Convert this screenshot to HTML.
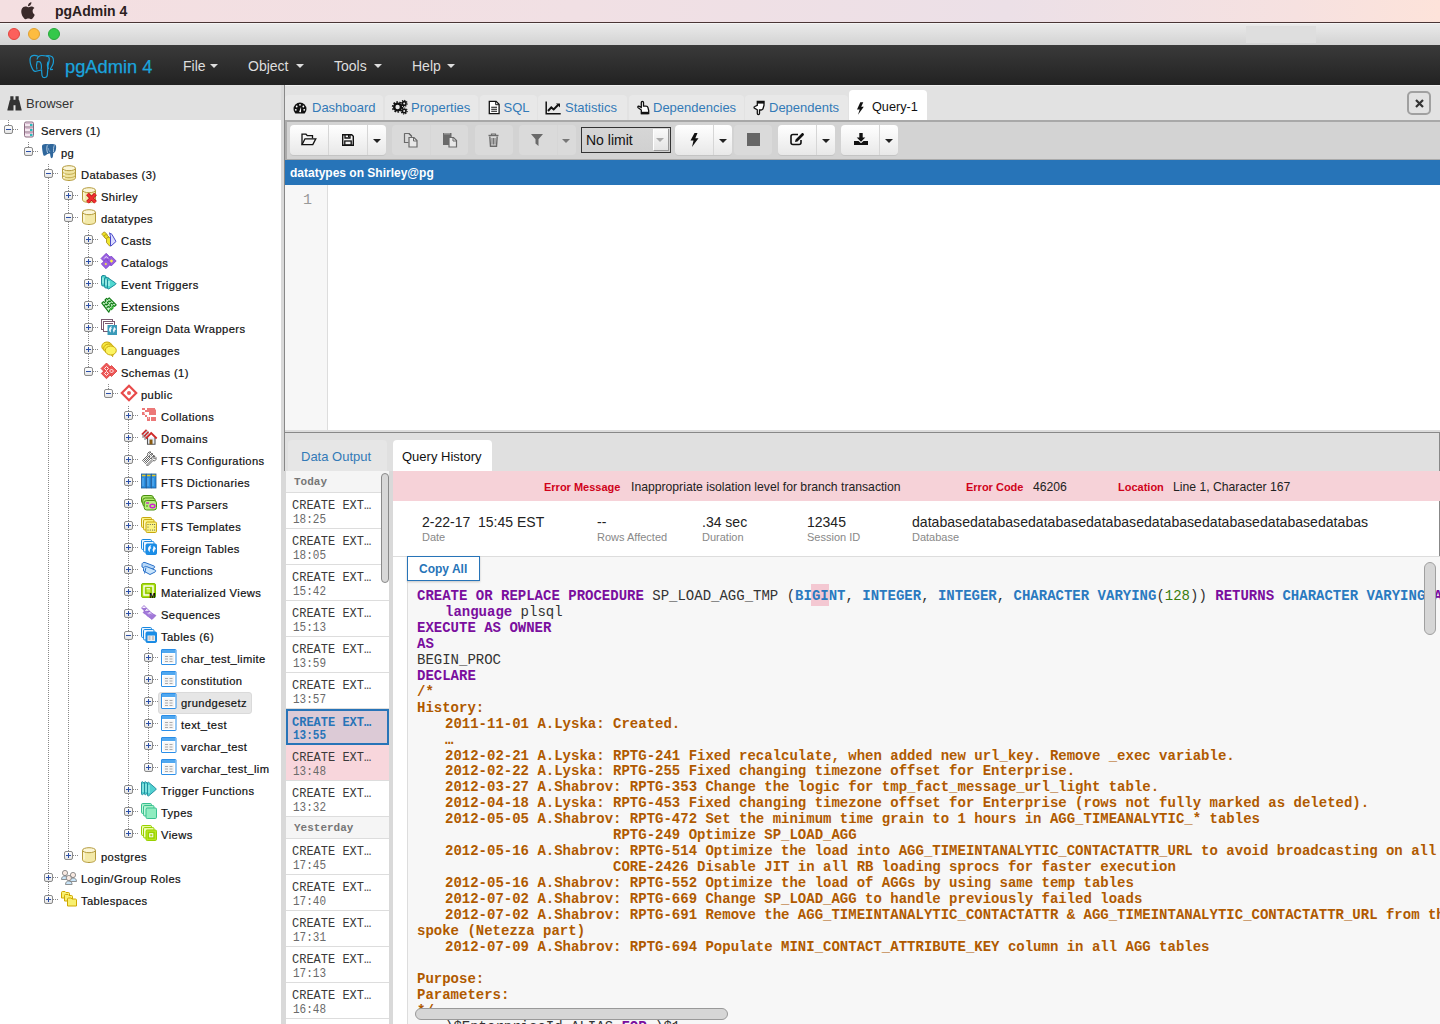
<!DOCTYPE html>
<html><head><meta charset="utf-8"><style>
*{box-sizing:border-box}
html,body{margin:0;padding:0;width:1440px;height:1024px;overflow:hidden;background:#fff;font-family:"Liberation Sans",sans-serif;position:relative}
.a{position:absolute}
.t{position:absolute;white-space:pre;line-height:1}
svg{position:absolute;overflow:visible}
#menubar{left:0;top:0;width:1440px;height:22px;background:linear-gradient(90deg,#f4dfe1 0%,#f1e0e4 40%,#ece0e7 70%,#f6e1e0 90%,#fde3da 100%)}
#mbline{left:0;top:22px;width:1440px;height:1px;background:#4a3535}
#titlebar{left:0;top:23px;width:1440px;height:22px;background:linear-gradient(#ebebeb,#d3d3d3)}
.light{position:absolute;top:28px;width:12px;height:12px;border-radius:50%}
#navbar{left:0;top:45px;width:1440px;height:40px;background:linear-gradient(#3a3a3a,#222)}
.menu{position:absolute;top:59px;font-size:14px;color:#dedede;line-height:1}
.caret{position:absolute;top:64px;width:0;height:0;border-left:4px solid transparent;border-right:4px solid transparent;border-top:4px solid #dedede}
#lhead{left:0;top:85px;width:281px;height:35px;background:#e1e1e1}
#tree{left:0;top:120px;width:281px;height:904px;background:#fff;overflow:hidden}
#split{left:281px;top:85px;width:5px;height:939px;background:#d9d9d9}
#tabs{left:285px;top:85px;width:1155px;height:35px;background:#e2e2e2;border-top:1px solid #f0f0f0}
.tab{position:absolute;top:95px;height:25px;background:#e8e8e8;border-radius:4px 4px 0 0}
.tabt{position:absolute;top:101px;font-size:13px;color:#337ab7;line-height:1;white-space:pre}
#toolbar{left:285px;top:120px;width:1155px;height:40px;background:#d3d3d3;border-top:2px solid #a8a8a8;border-bottom:1px solid #aaa;border-left:2px solid #ababab}
.btn{position:absolute;top:125px;height:30px;background:linear-gradient(#fff,#e8e8e8);border-radius:4px;box-shadow:0 1px 0 #c4c4c4}
.btnd{position:absolute;top:125px;height:30px;background:#dadada;border-radius:4px}
.dv{position:absolute;top:125px;width:1px;height:30px;background:#d6d6d6}
#bluebar{left:285px;top:160px;width:1155px;height:25px;background:#2774b8}
#editor{left:285px;top:185px;width:1155px;height:245px;background:#fff}
#gutter{left:285px;top:185px;width:43px;height:245px;background:#f7f7f7;border-right:1px solid #ddd}
#edbot{left:285px;top:430px;width:1155px;height:3px;background:#dcdcdc;border-bottom:1px solid #888}
#btabs{left:285px;top:433px;width:1155px;height:38px;background:#e0e0e0}
#vline{left:284px;top:85px;width:1px;height:386px;background:#888}
#hist{left:286px;top:471px;width:103px;height:553px;background:#fff;overflow:hidden}
#hgap{left:389px;top:471px;width:4px;height:553px;background:#d9d9d9}
.hh{position:absolute;left:0;width:103px;height:22px;background:#f5f5f5;border-bottom:1px solid #ddd}
.hht{position:absolute;left:8px;top:6px;font-family:"Liberation Mono",monospace;font-weight:bold;font-size:11px;color:#777;line-height:1}
.hi{position:absolute;left:0;width:103px;height:36px;border-bottom:1px solid #ddd;background:#fff}
.hi1{position:absolute;left:6px;top:7px;font-family:"Liberation Mono",monospace;font-size:12px;color:#3a3a3a;line-height:1;white-space:pre}
.hi2{position:absolute;left:7px;top:21px;font-family:"Liberation Mono",monospace;font-size:11px;color:#6a6a6a;transform:scaleY(1.12);transform-origin:0 0;line-height:1;white-space:pre}
#detail{left:393px;top:471px;width:1047px;height:553px;background:#fff}
#errbar{left:393px;top:471px;width:1047px;height:30px;background:#f6d2d8}
.el{position:absolute;top:482px;font-size:11px;font-weight:bold;color:#d0021b;line-height:1;white-space:pre}
.ev{position:absolute;top:481px;font-size:12.2px;color:#222;line-height:1;white-space:pre}
.iv{position:absolute;top:515px;font-size:14px;color:#222;line-height:1;white-space:pre}
.il{position:absolute;top:532px;font-size:11px;color:#888;line-height:1;white-space:pre}
#infob{left:393px;top:556px;width:1047px;height:1px;background:#ddd}
#code{left:407px;top:557px;width:1033px;height:467px;background:#f7f7f7;border-left:1px solid #ddd;overflow:hidden}
#copy{left:407px;top:556px;width:73px;height:25px;background:#fff;border:1px solid #2774b8;box-shadow:0 1px 2px rgba(0,0,0,.2)}
pre{margin:0;font-family:"Liberation Mono",monospace;font-size:14px;line-height:15.96px;color:#333;tab-size:28px;-moz-tab-size:28px}
.k{color:#7a0e9e;font-weight:bold}
.b{color:#2a7ac0;font-weight:bold}
.c{color:#b05a00;font-weight:bold}
.n{color:#3a7d0c}
.tl{position:absolute;white-space:pre;line-height:1;font-size:11.2px;letter-spacing:0.4px;color:#111;-webkit-text-stroke:0.2px #111}
.tg{position:absolute;width:9px;height:9px;border:1px solid #8a8a8a;border-radius:2px;background:linear-gradient(#fff,#e4e4e4)}
.tg:before{content:"";position:absolute;left:1px;top:3px;width:5px;height:1px;background:#2b4fa8}
.tg.p:after{content:"";position:absolute;left:3px;top:1px;width:1px;height:5px;background:#2b4fa8}
.vd{position:absolute;width:1px;background-image:linear-gradient(#888 50%,transparent 50%);background-size:1px 2px}
.hd{position:absolute;height:1px;background-image:linear-gradient(90deg,#888 50%,transparent 50%);background-size:2px 1px}
</style></head><body>
<div id="menubar" class="a"></div><div id="mbline" class="a"></div><div id="titlebar" class="a"></div>
<div class="a" style="left:0;top:23px;width:1440px;height:1px;background:#f4f4f4"></div>
<div class="a" style="left:1246px;top:26px;width:70px;height:17px;background:#dedede"></div>
<div class="light" style="left:8px;background:#fc605c;border:1px solid #e3463f"></div>
<div class="light" style="left:28px;background:#fdbc40;border:1px solid #e1a032"></div>
<div class="light" style="left:48px;background:#34c84a;border:1px solid #28a83a"></div>
<svg style="left:21px;top:2px" width="14" height="17" viewBox="0 0 14 17"><path d="M11.6 9.1c0-2 1.7-3 1.8-3.1-1-1.4-2.5-1.6-3-1.6-1.3-.1-2.5.8-3.2.8-.7 0-1.7-.8-2.8-.7C3 4.5 1.7 5.3 1 6.6c-1.5 2.6-.4 6.4 1.1 8.5.7 1 1.5 2.2 2.6 2.1 1-.1 1.4-.7 2.7-.7 1.2 0 1.6.7 2.7.7 1.1 0 1.8-1 2.5-2.1.8-1.2 1.1-2.300 1.1-2.400 0 0-2.100-.8-2.100-3.600zM9.5 3c.6-.7 1-1.700.9-2.700-.9 0-1.900.6-2.500 1.300-.5.600-1 1.600-.9 2.600 1 .1 1.900-.5 2.500-1.200z" fill="#3a2a2a"/></svg>
<div class="t" style="left:55px;top:4px;font-size:14px;font-weight:bold;color:#2a2020">pgAdmin 4</div>
<div id="navbar" class="a"></div>
<svg style="left:29px;top:54px" width="26" height="25" viewBox="0 0 26 25"><g fill="none" stroke="#1a9fd8" stroke-width="1.2" stroke-linejoin="round"><path d="M9 2.2C6.5.8 3 1 1.8 2.8.8 4.5 1 8.5 2 11.5 3 14.5 4.2 17 6 17.3 8 17.5 10 16.5 12 16"/><path d="M8 5.5C8.5 3 10.5 1.5 13 1.5 16 1.5 19 1.5 20 3.5 21 5.5 19.5 9 19 12 18.8 14 18.8 15.5 18.6 17L18.3 21C18 24 13.5 24.5 13 21.5 12.7 19 12.6 17 12.6 15.5"/><path d="M8 15.5C7.3 13 7.5 9.5 8.2 7.5L11 7.8C12.5 9.5 12.6 13 12.2 15.5"/><path d="M17 2C20 1.2 23.5 2 24.2 4.5 24.8 7.5 24 11 22.5 13 21.8 14 21 15 21.5 15.7L24 15.4"/><path d="M19.5 7.5C18 9 18 12.5 19.5 15"/></g></svg>
<div class="t" style="left:65px;top:58px;font-size:18.3px;color:#1ba4dd;-webkit-text-stroke:0.25px #1ba4dd">pgAdmin 4</div>
<div class="menu" style="left:183px">File</div><div class="caret" style="left:210px"></div>
<div class="menu" style="left:248px">Object</div><div class="caret" style="left:296px"></div>
<div class="menu" style="left:334px">Tools</div><div class="caret" style="left:374px"></div>
<div class="menu" style="left:412px">Help</div><div class="caret" style="left:447px"></div>
<div id="lhead" class="a"></div>
<svg style="left:7px;top:96px" width="15" height="15" viewBox="0 0 15 15"><path d="M3.3.3h3.2v3.5h2V.3h3.2v3.5l.6.6 2.3 9.4v.6H8.5V9.2h-2v5.2H.4v-.6L2.7 4.4l.6-.6z" fill="#333"/></svg>
<div class="t" style="left:26px;top:97px;font-size:13px;color:#333">Browser</div>
<div id="tree" class="a"></div>
<div class="vd" style="left:8px;top:120px;height:9px"></div>
<div class="vd" style="left:28px;top:142px;height:9px"></div>
<div class="vd" style="left:48px;top:164px;height:735px"></div>
<div class="vd" style="left:68px;top:186px;height:669px"></div>
<div class="vd" style="left:88px;top:230px;height:141px"></div>
<div class="vd" style="left:108px;top:384px;height:9px"></div>
<div class="vd" style="left:128px;top:406px;height:427px"></div>
<div class="vd" style="left:148px;top:648px;height:119px"></div>
<div class="a" style="left:158px;top:692px;width:94px;height:22px;background:#e6e6e6;border:1px solid #dadada;border-radius:3px"></div>
<div class="hd" style="left:13px;top:129px;width:6px"></div>
<div class="tg " style="left:4px;top:125px"></div>
<svg style="left:21px;top:121px" width="16" height="16" viewBox="0 0 16 16"><rect x="3.5" y="1" width="9" height="15" rx="1.5" fill="#f4e8f0" stroke="#8a6a80"/><path d="M3.5 6h9M3.5 11h9" stroke="#8a6a80"/><path d="M4.5 2.5h7M4.5 7.5h7M4.5 12.5h7" stroke="#d8b8d0"/><rect x="9" y="3" width="2.5" height="2" fill="#2bbdbd"/><rect x="9" y="8" width="2.5" height="2" fill="#2bbdbd"/><rect x="9" y="13" width="2.5" height="2" fill="#2bbdbd"/></svg>
<div class="tl" style="left:41px;top:126px">Servers (1)</div>
<div class="hd" style="left:33px;top:151px;width:6px"></div>
<div class="tg " style="left:24px;top:147px"></div>
<svg style="left:41px;top:143px" width="16" height="16" viewBox="0 0 16 16"><path d="M1 3C1 1.5 3 .8 5 1L8 1.3C10 .8 13 .8 14.5 1.8 15.5 3 15.3 6 14.5 8 14 9.3 13 10 12.2 10.2L12 13C11.8 14.5 11 15.2 10.5 15.2 9.8 15 9.5 14 9.3 12.5L9 10.5C8 10.2 7 10.5 6 11.2 4.5 12.3 3.5 13 2.8 12.8 1.8 11 1 6 1 3z" fill="#2f679c"/><path d="M6.3 2.2C5.6 4.5 5.6 7.5 6.6 10M13.3 2.3C12.6 4 12.3 6.5 12.6 9.2" fill="none" stroke="#d0e0f0" stroke-width=".8"/><path d="M7.2 5c.3 1.5.8 3 1.8 4" fill="none" stroke="#a8c4e0" stroke-width=".6"/></svg>
<div class="tl" style="left:61px;top:148px">pg</div>
<div class="hd" style="left:53px;top:173px;width:6px"></div>
<div class="tg " style="left:44px;top:169px"></div>
<svg style="left:61px;top:165px" width="16" height="16" viewBox="0 0 16 16"><path d="M1.5 3.2v9.6c0 1.5 2.9 2.7 6.5 2.7s6.5-1.2 6.5-2.7V3.2" fill="#f0e4a0" stroke="#b49a3c"/><path d="M1.5 6.6c0 1.5 2.9 2.7 6.5 2.7s6.5-1.2 6.5-2.7M1.5 10c0 1.5 2.9 2.7 6.5 2.7s6.5-1.2 6.5-2.7" fill="none" stroke="#c0a848"/><path d="M3 5v1.5M3 8.5v1.5M3 12v1.2" stroke="#fff" stroke-width="1.2"/><ellipse cx="8" cy="3.2" rx="6.5" ry="2.5" fill="#fbf6d8" stroke="#b49a3c"/></svg>
<div class="tl" style="left:81px;top:170px">Databases (3)</div>
<div class="hd" style="left:73px;top:195px;width:6px"></div>
<div class="tg p" style="left:64px;top:191px"></div>
<svg style="left:81px;top:187px" width="16" height="16" viewBox="0 0 16 16"><path d="M1.5 3.2v9.6c0 1.5 2.9 2.7 6.5 2.7s6.5-1.2 6.5-2.7V3.2" fill="#f3e9a8" stroke="#b49a3c"/><path d="M3 4.5v8" stroke="#fffbe8" stroke-width="1.2"/><ellipse cx="8" cy="3.2" rx="6.5" ry="2.5" fill="#fbf6d8" stroke="#b49a3c"/><path d="M6.5 7l8 8.3M14.5 7l-8 8.3" stroke="#b01010" stroke-width="3.8"/><path d="M6.5 7l8 8.3M14.5 7l-8 8.3" stroke="#f03030" stroke-width="2.4"/></svg>
<div class="tl" style="left:101px;top:192px">Shirley</div>
<div class="hd" style="left:73px;top:217px;width:6px"></div>
<div class="tg " style="left:64px;top:213px"></div>
<svg style="left:81px;top:209px" width="16" height="16" viewBox="0 0 16 16"><path d="M1.5 3.2v9.6c0 1.5 2.9 2.7 6.5 2.7s6.5-1.2 6.5-2.7V3.2" fill="#f3e9a8" stroke="#b49a3c"/><path d="M3 4.5v8" stroke="#fffbe8" stroke-width="1.2"/><ellipse cx="8" cy="3.2" rx="6.5" ry="2.5" fill="#fbf6d8" stroke="#b49a3c"/></svg>
<div class="tl" style="left:101px;top:214px">datatypes</div>
<div class="hd" style="left:93px;top:239px;width:6px"></div>
<div class="tg p" style="left:84px;top:235px"></div>
<svg style="left:101px;top:231px" width="16" height="16" viewBox="0 0 16 16"><path d="M1 3.5C1 2 2.5 1 3.8 1.2L6.5 3.8 4 6.5z" fill="#ece020" stroke="#a89020" stroke-width=".9"/><path d="M3 5.8c0-1.3 1.3-2.3 2.6-2.1L8.5 6.6 6 9z" fill="#ece020" stroke="#a89020" stroke-width=".9"/><path d="M5.5 8.3c0-1.3 1.2-2.2 2.5-2.1l1.6 1.6V15h-1L5.5 11.5z" fill="#f0e830" stroke="#a89020" stroke-width=".9"/><path d="M8.6 1.8L10 3.2V2.5l1.2 1.4L15 10.5 10 15H9.5V6z" fill="#dcdcff" stroke="#4848c8" stroke-width="1"/></svg>
<div class="tl" style="left:121px;top:236px">Casts</div>
<div class="hd" style="left:93px;top:261px;width:6px"></div>
<div class="tg p" style="left:84px;top:257px"></div>
<svg style="left:101px;top:253px" width="16" height="16" viewBox="0 0 16 16"><g fill="#9a60e0" stroke="#7a40c8" stroke-width=".8"><path d="M0 5.5L5.2.3 10.4 5.5 5.2 10.7z"/><path d="M5.2 10.5L10.2 5.5 15.2 10.5 10.2 15.5z" transform="translate(0 -2.5)"/><path d="M.3 11L5 6.3 9.7 11 5 15.7z"/></g><path d="M8.8 8l1.7-1.7L12.2 8l-1.7 1.7z" fill="#f8f040"/><path d="M3.5 11l1.3-1.3L6.1 11l-1.3 1.3z" fill="#f8f040"/><path d="M3.2 5.5l2-2 2 2" fill="none" stroke="#fff" stroke-width=".9"/></svg>
<div class="tl" style="left:121px;top:258px">Catalogs</div>
<div class="hd" style="left:93px;top:283px;width:6px"></div>
<div class="tg p" style="left:84px;top:279px"></div>
<svg style="left:101px;top:275px" width="16" height="16" viewBox="0 0 16 16"><rect x=".5" y=".5" width="4.5" height="10.5" rx="1.5" fill="#48d0c8" stroke="#1a8a9a"/><rect x="3.5" y="2.5" width="4.5" height="10.5" rx="1.5" fill="#48d0c8" stroke="#1a8a9a"/><path d="M6.5 4.5c0-1 .8-1.3 1.6-.8l6.4 4.3c.6.4.6 1 0 1.4L8.1 13.7c-.8.5-1.6.2-1.6-.8z" fill="#50d8d0" stroke="#1a8a9a"/><path d="M2 2.5v6M5 4.5v6M8 6v5" stroke="#d8fff8" stroke-width="1"/></svg>
<div class="tl" style="left:121px;top:280px">Event Triggers</div>
<div class="hd" style="left:93px;top:305px;width:6px"></div>
<div class="tg p" style="left:84px;top:301px"></div>
<svg style="left:101px;top:297px" width="16" height="16" viewBox="0 0 16 16"><path d="M.8 6.2l1.6-1.6 1 1L5 4 4 3l1.6-1.6 1 1L8.2.8 15.2 7.8l-1.6 1.6-1-1L11 10l1 1-1.6 1.6-1-1L7.8 15.2z" fill="#c8f4c8" stroke="#0e7a14" stroke-width="1.1" stroke-linejoin="round"/><path d="M3.2 8.6l1.6-1.6 1 1L7.4 6.4l-1-1L8 3.8l1 1 1.6-1.6M5.6 11l1.6-1.6 1 1 1.6-1.6-1-1 1.6-1.6 1 1L13 5.6" fill="none" stroke="#0e7a14" stroke-width="1.1" stroke-linejoin="round"/><path d="M9 13l4-4" stroke="#40c040" stroke-width="1.5"/></svg>
<div class="tl" style="left:121px;top:302px">Extensions</div>
<div class="hd" style="left:93px;top:327px;width:6px"></div>
<div class="tg p" style="left:84px;top:323px"></div>
<svg style="left:101px;top:319px" width="16" height="16" viewBox="0 0 16 16"><rect x=".5" y=".5" width="11" height="10" fill="#fff" stroke="#7a5a70"/><path d="M2 2.5h8" stroke="#7a5a70"/><rect x="2.5" y="2.5" width="11" height="10" fill="#fff" stroke="#7a5a70"/><path d="M4 4.5h8" stroke="#7a5a70"/><rect x="6.5" y="6" width="9.5" height="10" fill="#3a9ab8"/><path d="M8 11c0-2 1-3.5 3-4-1 1.5-1 2 0 2.5-1 .5-1.5 2-1 4-1-.5-2-1.5-2-2.5zM13 8c1 .5 2 1.5 2 3-.5-.3-1-.2-1.2.3 0 1-.5 2-1.5 2.7.3-1 0-2-.5-2.5.5-1 1-2 1.2-3.5z" fill="#f0f8ff"/></svg>
<div class="tl" style="left:121px;top:324px">Foreign Data Wrappers</div>
<div class="hd" style="left:93px;top:349px;width:6px"></div>
<div class="tg p" style="left:84px;top:345px"></div>
<svg style="left:101px;top:341px" width="16" height="16" viewBox="0 0 16 16"><ellipse cx="6" cy="5.5" rx="5.2" ry="4.5" fill="#f8e840" stroke="#c8a810"/><ellipse cx="7.8" cy="7.5" rx="5.2" ry="4.5" fill="#f8e840" stroke="#c8a810"/><path d="M10.2 13.5l1.4 2.2.6-2.8" fill="#fcf060" stroke="#c8a810"/><ellipse cx="9.8" cy="9.5" rx="5.5" ry="4.5" fill="#fcf460" stroke="#c8a810"/></svg>
<div class="tl" style="left:121px;top:346px">Languages</div>
<div class="hd" style="left:93px;top:371px;width:6px"></div>
<div class="tg " style="left:84px;top:367px"></div>
<svg style="left:101px;top:363px" width="16" height="16" viewBox="0 0 16 16"><g fill="#ee5858" stroke="#d83a3a" stroke-width=".8"><path d="M0 5.5L5.5 0 11 5.5 5.5 11z"/><path d="M5 8L10.5 2.5 16 8 10.5 13.5z"/><path d="M.3 10.5L5.5 5.3 10.7 10.5 5.5 15.7z"/></g><path d="M3.5 5.5l2-2 2 2-2 2z" fill="none" stroke="#fff" stroke-width=".9"/><path d="M8.5 8l2-2 2 2-2 2z" fill="none" stroke="#fff" stroke-width=".9"/><path d="M3.5 10.5l2-2 2 2-2 2z" fill="none" stroke="#fff" stroke-width=".9"/></svg>
<div class="tl" style="left:121px;top:368px">Schemas (1)</div>
<div class="hd" style="left:113px;top:393px;width:6px"></div>
<div class="tg " style="left:104px;top:389px"></div>
<svg style="left:121px;top:385px" width="16" height="16" viewBox="0 0 16 16"><path d="M8 .8L15.2 8 8 15.2.8 8z" fill="#fff" stroke="#e84a4a" stroke-width="2.2"/><circle cx="8" cy="8" r="2" fill="#ea5a5a"/></svg>
<div class="tl" style="left:141px;top:390px">public</div>
<div class="hd" style="left:133px;top:415px;width:6px"></div>
<div class="tg p" style="left:124px;top:411px"></div>
<svg style="left:141px;top:407px" width="16" height="16" viewBox="0 0 16 16"><g fill="#ec7878"><path d="M1 1h3v2H1zM4 3h2v2H4zM1 5h3v3H1zM4 8h2v2H4zM6 10h3v4H6zM6 1h8v1.5h1V8H8V5H6zM10 10h5v4h-5z"/></g><path d="M3 6h1M7 11h1" stroke="#fff"/></svg>
<div class="tl" style="left:161px;top:412px">Collations</div>
<div class="hd" style="left:133px;top:437px;width:6px"></div>
<div class="tg p" style="left:124px;top:433px"></div>
<svg style="left:141px;top:429px" width="16" height="16" viewBox="0 0 16 16"><path d="M2 9V5L6 1.5l1 1" fill="#e8eef8" stroke="#555" stroke-width=".8"/><path d="M4 11V7l4-3.5" fill="#e8eef8" stroke="#555" stroke-width=".8"/><path d="M.8 5.5L5.5.8M2.8 7.5L7.5 2.8" stroke="#d02a2a" stroke-width="1.5"/><path d="M6.5 8.5v6.8h7.5V8.5" fill="#e4ecf8" stroke="#555" stroke-width="1.1"/><path d="M4.8 9.5L10.2 4l5.5 5.5" fill="none" stroke="#d02a2a" stroke-width="1.8"/><rect x="8.5" y="10.5" width="3" height="4.8" fill="#8a5a10"/></svg>
<div class="tl" style="left:161px;top:434px">Domains</div>
<div class="hd" style="left:133px;top:459px;width:6px"></div>
<div class="tg p" style="left:124px;top:455px"></div>
<svg style="left:141px;top:451px" width="16" height="16" viewBox="0 0 16 16"><g fill="#f4f4f4" stroke="#666" stroke-width="1"><path d="M1.5 9.5L7 4l-.5-1.5L8 1h2L8.5 2.5l1 1L11 2v2L9.5 5.5 8 5l-5.5 5.5z"/><path d="M3.5 11.5L9 6l-.5-1.5L10 3h2l-1.5 1.5 1 1L13 4v2l-1.5 1.5L10 7l-5.5 5.5z"/><path d="M5.5 14L11 8.5l-.5-1.5L12 5.5h2l-1.5 1.5 1 1L15 6.5v2L13.5 10 12 9.5 6.5 15z"/></g></svg>
<div class="tl" style="left:161px;top:456px">FTS Configurations</div>
<div class="hd" style="left:133px;top:481px;width:6px"></div>
<div class="tg p" style="left:124px;top:477px"></div>
<svg style="left:141px;top:473px" width="16" height="16" viewBox="0 0 16 16"><rect x=".5" y="1" width="4.5" height="14" fill="#2a8ee0" stroke="#1a5a9a" stroke-width=".8"/><rect x="5.5" y="1" width="4.5" height="14" fill="#2a8ee0" stroke="#1a5a9a" stroke-width=".8"/><rect x="10.5" y="1" width="4.5" height="14" fill="#2a8ee0" stroke="#1a5a9a" stroke-width=".8"/><path d="M1 2.5h3.5M6 2.5h3.5M11 2.5h3.5" stroke="#e8c820" stroke-width="1.4"/><path d="M2 5v8M7 5v8M12 5v8" stroke="#7ac0f8" stroke-width=".8"/></svg>
<div class="tl" style="left:161px;top:478px">FTS Dictionaries</div>
<div class="hd" style="left:133px;top:503px;width:6px"></div>
<div class="tg p" style="left:124px;top:499px"></div>
<svg style="left:141px;top:495px" width="16" height="16" viewBox="0 0 16 16"><rect x=".5" y=".5" width="12" height="8" rx="2.5" fill="#b0e870" stroke="#4a9010"/><rect x="1.8" y="3" width="12.5" height="8.5" rx="2.5" fill="#b0e870" stroke="#4a9010"/><rect x="3.2" y="5.5" width="12.3" height="9.5" rx="2.5" fill="#b8f080" stroke="#4a9010"/><path d="M5 8h3" stroke="#d020d0" stroke-width="1.3"/><path d="M5 11h2" stroke="#4a9010" stroke-width="1"/><ellipse cx="11.5" cy="11" rx="2.5" ry="1.8" fill="none" stroke="#d020d0" stroke-width="1.4"/></svg>
<div class="tl" style="left:161px;top:500px">FTS Parsers</div>
<div class="hd" style="left:133px;top:525px;width:6px"></div>
<div class="tg p" style="left:124px;top:521px"></div>
<svg style="left:141px;top:517px" width="16" height="16" viewBox="0 0 16 16"><rect x=".5" y=".5" width="10" height="10" rx="1.2" fill="#fcf480" stroke="#c8a810"/><path d="M2 2.5v6" stroke="#ffffff" stroke-width="1"/><rect x="2.5" y="2.5" width="10.5" height="10.5" rx="1.2" fill="#fcf480" stroke="#c8a810"/><path d="M4 4.5v7" stroke="#ffffff" stroke-width="1"/><rect x="5" y="5" width="10.5" height="10.5" rx="1.2" fill="#fcf480" stroke="#c8a810"/><g fill="#555"><circle cx="7" cy="7.5" r=".6"/><circle cx="9.3" cy="7.5" r=".6"/><circle cx="11.6" cy="7.5" r=".6"/><circle cx="13.6" cy="7.5" r=".6"/><circle cx="7" cy="10" r=".6"/><circle cx="13.6" cy="10" r=".6"/><circle cx="7" cy="13" r=".6"/><circle cx="9.3" cy="13" r=".6"/><circle cx="11.6" cy="13" r=".6"/><circle cx="13.6" cy="13" r=".6"/></g></svg>
<div class="tl" style="left:161px;top:522px">FTS Templates</div>
<div class="hd" style="left:133px;top:547px;width:6px"></div>
<div class="tg p" style="left:124px;top:543px"></div>
<svg style="left:141px;top:539px" width="16" height="16" viewBox="0 0 16 16"><rect x=".5" y=".5" width="10" height="10" rx="1.2" fill="#e8f4ff" stroke="#1a88e0"/><path d="M2 2.5v6" stroke="#ffffff" stroke-width="1"/><rect x="2.5" y="2.5" width="10.5" height="10.5" rx="1.2" fill="#e8f4ff" stroke="#1a88e0"/><path d="M4 4.5v7" stroke="#ffffff" stroke-width="1"/><rect x="5" y="5" width="10.5" height="10.5" rx="1.2" fill="#1a8ee8" stroke="#1a88e0"/><path d="M7 10c0-2 1.5-3.5 3.5-4-1.5 1.5-1 2.5 0 3-1.5.5-2 2-1.5 4-1-.3-2-1.5-2-3zM12.5 7c1.3.5 2.5 2 2.5 3.5-.5-.3-1-.2-1.3.3-.2 1.2-.7 2.2-1.7 3 .3-1 0-2.2-.6-2.8.6-1 1-2.2 1.1-4z" fill="#f4f8ff"/></svg>
<div class="tl" style="left:161px;top:544px">Foreign Tables</div>
<div class="hd" style="left:133px;top:569px;width:6px"></div>
<div class="tg p" style="left:124px;top:565px"></div>
<svg style="left:141px;top:561px" width="16" height="16" viewBox="0 0 16 16"><path d="M1 3.5C1 2 2.5 1 4 1.5l9 3.5c1 .4 1 1.5 0 2L8 9.5 1 6z" fill="#b8d8f8" stroke="#2a70c8"/><path d="M2.5 7.5c0-1.5 1.5-2.5 3-2l8.5 3.5c1 .4 1 1.5 0 2L9 13.5 2.5 10z" fill="#c8e4fc" stroke="#2a70c8"/><path d="M5 6.5l-1.5 6" stroke="#2a70c8"/></svg>
<div class="tl" style="left:161px;top:566px">Functions</div>
<div class="hd" style="left:133px;top:591px;width:6px"></div>
<div class="tg p" style="left:124px;top:587px"></div>
<svg style="left:141px;top:583px" width="16" height="16" viewBox="0 0 16 16"><rect x=".5" y=".5" width="14" height="14" rx="1.5" fill="#a8dc10" stroke="#88c000"/><rect x="3" y="3" width="9" height="9" fill="none" stroke="#fff" stroke-width="1.4"/><rect x="5" y="5" width="5" height="5" fill="#c8f040" stroke="#88c000"/><rect x="5.5" y="5" width="3.5" height="1.3" fill="#e8f8c0"/><text x="8.3" y="15.2" font-size="7.5" font-family="Liberation Sans" fill="#000" font-weight="bold">M</text></svg>
<div class="tl" style="left:161px;top:588px">Materialized Views</div>
<div class="hd" style="left:133px;top:613px;width:6px"></div>
<div class="tg p" style="left:124px;top:609px"></div>
<svg style="left:141px;top:605px" width="16" height="16" viewBox="0 0 16 16"><g fill="#a078d8" stroke="#8a58c8" stroke-width=".6"><path d="M.5 3l2.5-2.5L5.5 3 3 5.5z"/><path d="M3.3 5.8l2.5-2.5L8.3 5.8 5.8 8.3z"/><path d="M6.1 8.6l2.5-2.5 2.5 2.5L8.6 11.1z"/><path d="M2 7.5l2.5-2.5L15 10.5 11 14.5z"/></g><path d="M1.5 3l1.5-1.5L4.5 3M4.3 5.8l1.5-1.5 1.5 1.5M7.1 8.6l1.5-1.5 1.5 1.5" fill="#fff" stroke="#fff" stroke-width=".8"/><path d="M4 9l3 3M6 7.5l3 3M8.5 7l3 3" stroke="#c8a8f0" stroke-width=".7"/></svg>
<div class="tl" style="left:161px;top:610px">Sequences</div>
<div class="hd" style="left:133px;top:635px;width:6px"></div>
<div class="tg " style="left:124px;top:631px"></div>
<svg style="left:141px;top:627px" width="16" height="16" viewBox="0 0 16 16"><rect x=".5" y=".5" width="10" height="10" rx="1.2" fill="#e8f4ff" stroke="#1a88e0"/><path d="M2 2.5v6" stroke="#ffffff" stroke-width="1"/><rect x="2.5" y="2.5" width="10.5" height="10.5" rx="1.2" fill="#e8f4ff" stroke="#1a88e0"/><path d="M4 4.5v7" stroke="#ffffff" stroke-width="1"/><rect x="5" y="5" width="10.5" height="10.5" rx="1.2" fill="#1a8ee8" stroke="#1a88e0"/><rect x="6.5" y="8.5" width="7.5" height="5.5" fill="#ececec"/><path d="M7.5 10h2M11 10h2M7.5 12h2M11 12h2" stroke="#999" stroke-width=".9"/></svg>
<div class="tl" style="left:161px;top:632px">Tables (6)</div>
<div class="hd" style="left:153px;top:657px;width:6px"></div>
<div class="tg p" style="left:144px;top:653px"></div>
<svg style="left:161px;top:649px" width="16" height="16" viewBox="0 0 16 16"><rect x=".5" y=".5" width="14.5" height="15" rx=".5" fill="#fff" stroke="#2a8ee8"/><rect x="1" y="1" width="13.5" height="3" fill="#50a8f0"/><rect x="2.5" y="5.5" width="10.5" height="8.5" fill="#f4f4f4"/><path d="M4 7.5h3M8.5 7.5h3M4 10h3M8.5 10h3M4 12.5h3M8.5 12.5h3" stroke="#aaa" stroke-width="1"/></svg>
<div class="tl" style="left:181px;top:654px">char_test_limite</div>
<div class="hd" style="left:153px;top:679px;width:6px"></div>
<div class="tg p" style="left:144px;top:675px"></div>
<svg style="left:161px;top:671px" width="16" height="16" viewBox="0 0 16 16"><rect x=".5" y=".5" width="14.5" height="15" rx=".5" fill="#fff" stroke="#2a8ee8"/><rect x="1" y="1" width="13.5" height="3" fill="#50a8f0"/><rect x="2.5" y="5.5" width="10.5" height="8.5" fill="#f4f4f4"/><path d="M4 7.5h3M8.5 7.5h3M4 10h3M8.5 10h3M4 12.5h3M8.5 12.5h3" stroke="#aaa" stroke-width="1"/></svg>
<div class="tl" style="left:181px;top:676px">constitution</div>
<div class="hd" style="left:153px;top:701px;width:6px"></div>
<div class="tg p" style="left:144px;top:697px"></div>
<svg style="left:161px;top:693px" width="16" height="16" viewBox="0 0 16 16"><rect x=".5" y=".5" width="14.5" height="15" rx=".5" fill="#fff" stroke="#2a8ee8"/><rect x="1" y="1" width="13.5" height="3" fill="#50a8f0"/><rect x="2.5" y="5.5" width="10.5" height="8.5" fill="#f4f4f4"/><path d="M4 7.5h3M8.5 7.5h3M4 10h3M8.5 10h3M4 12.5h3M8.5 12.5h3" stroke="#aaa" stroke-width="1"/></svg>
<div class="tl" style="left:181px;top:698px">grundgesetz</div>
<div class="hd" style="left:153px;top:723px;width:6px"></div>
<div class="tg p" style="left:144px;top:719px"></div>
<svg style="left:161px;top:715px" width="16" height="16" viewBox="0 0 16 16"><rect x=".5" y=".5" width="14.5" height="15" rx=".5" fill="#fff" stroke="#2a8ee8"/><rect x="1" y="1" width="13.5" height="3" fill="#50a8f0"/><rect x="2.5" y="5.5" width="10.5" height="8.5" fill="#f4f4f4"/><path d="M4 7.5h3M8.5 7.5h3M4 10h3M8.5 10h3M4 12.5h3M8.5 12.5h3" stroke="#aaa" stroke-width="1"/></svg>
<div class="tl" style="left:181px;top:720px">text_test</div>
<div class="hd" style="left:153px;top:745px;width:6px"></div>
<div class="tg p" style="left:144px;top:741px"></div>
<svg style="left:161px;top:737px" width="16" height="16" viewBox="0 0 16 16"><rect x=".5" y=".5" width="14.5" height="15" rx=".5" fill="#fff" stroke="#2a8ee8"/><rect x="1" y="1" width="13.5" height="3" fill="#50a8f0"/><rect x="2.5" y="5.5" width="10.5" height="8.5" fill="#f4f4f4"/><path d="M4 7.5h3M8.5 7.5h3M4 10h3M8.5 10h3M4 12.5h3M8.5 12.5h3" stroke="#aaa" stroke-width="1"/></svg>
<div class="tl" style="left:181px;top:742px">varchar_test</div>
<div class="hd" style="left:153px;top:767px;width:6px"></div>
<div class="tg p" style="left:144px;top:763px"></div>
<svg style="left:161px;top:759px" width="16" height="16" viewBox="0 0 16 16"><rect x=".5" y=".5" width="14.5" height="15" rx=".5" fill="#fff" stroke="#2a8ee8"/><rect x="1" y="1" width="13.5" height="3" fill="#50a8f0"/><rect x="2.5" y="5.5" width="10.5" height="8.5" fill="#f4f4f4"/><path d="M4 7.5h3M8.5 7.5h3M4 10h3M8.5 10h3M4 12.5h3M8.5 12.5h3" stroke="#aaa" stroke-width="1"/></svg>
<div class="tl" style="left:181px;top:764px">varchar_test_lim</div>
<div class="hd" style="left:133px;top:789px;width:6px"></div>
<div class="tg p" style="left:124px;top:785px"></div>
<svg style="left:141px;top:781px" width="16" height="16" viewBox="0 0 16 16"><g fill="#50d0d0" stroke="#1a8898" stroke-width=".9"><path d="M.5 1.5c0-.8.7-1 1.3-.6L8 6.5c.5.4.5 1 0 1.4l-6.2 5.6c-.6.4-1.3.2-1.3-.6z"/><path d="M3.5 1.5c0-.8.7-1 1.3-.6L11 6.5c.5.4.5 1 0 1.4l-6.2 5.6c-.6.4-1.3.2-1.3-.6z"/><path d="M6.5 2c0-.8.7-1 1.3-.6l7 6c.5.4.5 1 0 1.4l-7 6c-.6.4-1.3.2-1.3-.6z"/></g><path d="M2 3v8M5 3v8M8 4v8" stroke="#c8fff8" stroke-width=".8"/></svg>
<div class="tl" style="left:161px;top:786px">Trigger Functions</div>
<div class="hd" style="left:133px;top:811px;width:6px"></div>
<div class="tg p" style="left:124px;top:807px"></div>
<svg style="left:141px;top:803px" width="16" height="16" viewBox="0 0 16 16"><rect x=".5" y=".5" width="10" height="10" rx="1.2" fill="#a8f0c8" stroke="#38c090"/><path d="M2 2.5v6" stroke="#e0fff0" stroke-width="1"/><rect x="2.5" y="2.5" width="10.5" height="10.5" rx="1.2" fill="#a8f0c8" stroke="#38c090"/><path d="M4 4.5v7" stroke="#e0fff0" stroke-width="1"/><rect x="5" y="5" width="10.5" height="10.5" rx="1.2" fill="#90ecc0" stroke="#38c090"/></svg>
<div class="tl" style="left:161px;top:808px">Types</div>
<div class="hd" style="left:133px;top:833px;width:6px"></div>
<div class="tg p" style="left:124px;top:829px"></div>
<svg style="left:141px;top:825px" width="16" height="16" viewBox="0 0 16 16"><rect x=".5" y=".5" width="10" height="10" rx="1.2" fill="#e8fca0" stroke="#98d000"/><path d="M2 2.5v6" stroke="#fff" stroke-width="1"/><rect x="2.5" y="2.5" width="10.5" height="10.5" rx="1.2" fill="#e8fca0" stroke="#98d000"/><path d="M4 4.5v7" stroke="#fff" stroke-width="1"/><rect x="5" y="5" width="10.5" height="10.5" rx="1.2" fill="#b8e820" stroke="#98d000"/><rect x="7.5" y="7.5" width="5.5" height="5.5" fill="#fff" stroke="#98d000" stroke-width="1.4"/><rect x="9.2" y="9.2" width="2.2" height="2.2" fill="#a8dc10"/></svg>
<div class="tl" style="left:161px;top:830px">Views</div>
<div class="hd" style="left:73px;top:855px;width:6px"></div>
<div class="tg p" style="left:64px;top:851px"></div>
<svg style="left:81px;top:847px" width="16" height="16" viewBox="0 0 16 16"><path d="M1.5 3.2v9.6c0 1.5 2.9 2.7 6.5 2.7s6.5-1.2 6.5-2.7V3.2" fill="#f3e9a8" stroke="#b49a3c"/><path d="M3 4.5v8" stroke="#fffbe8" stroke-width="1.2"/><ellipse cx="8" cy="3.2" rx="6.5" ry="2.5" fill="#fbf6d8" stroke="#b49a3c"/></svg>
<div class="tl" style="left:101px;top:852px">postgres</div>
<div class="hd" style="left:53px;top:877px;width:6px"></div>
<div class="tg p" style="left:44px;top:873px"></div>
<svg style="left:61px;top:869px" width="16" height="16" viewBox="0 0 16 16"><g stroke="#777" stroke-width=".8"><circle cx="4" cy="4" r="2.6" fill="#f8e8e0"/><path d="M.5 10.5c0-2.5 1.5-3.5 3.5-3.5S7.5 8 7.5 10.5z" fill="#c8e4f8"/><circle cx="12" cy="6" r="2.6" fill="#f8e8e0"/><path d="M8.5 12.5c0-2.5 1.5-3.5 3.5-3.5s3.5 1 3.5 3.5z" fill="#c8e4f8"/><circle cx="7.8" cy="9" r="2.6" fill="#f8e8e0"/><path d="M4.5 15.5c0-2.5 1.5-3.5 3.3-3.5s3.3 1 3.3 3.5z" fill="#c8e4f8"/></g></svg>
<div class="tl" style="left:81px;top:874px">Login/Group Roles</div>
<div class="hd" style="left:53px;top:899px;width:6px"></div>
<div class="tg p" style="left:44px;top:895px"></div>
<svg style="left:61px;top:891px" width="16" height="16" viewBox="0 0 16 16"><g fill="#f8f070" stroke="#d0a800" stroke-width="1"><path d="M.5 1.5c0-.6.4-1 1-1h2.5l1 1h2.5c.6 0 1 .4 1 1V7H.5z"/><path d="M3.5 4.5c0-.6.4-1 1-1H7l1 1h2.5c.6 0 1 .4 1 1V10h-8z"/><path d="M6.5 8c0-.6.4-1 1-1H10l1 1h3.5c.6 0 1 .4 1 1v6h-9z"/></g></svg>
<div class="tl" style="left:81px;top:896px">Tablespaces</div>
<div class="a" style="left:271px;top:120px;width:10px;height:904px;background:#fff"></div>
<div id="split" class="a"></div>
<div id="tabs" class="a"></div>
<div class="tab" style="left:285px;width:98px"></div>
<svg style="left:292px;top:103px" width="16" height="16" viewBox="0 0 16 16"><path d="M1.8 11A6.5 6.5 0 1 1 11.2 11Z" fill="#111" transform="translate(1.5 -0.5)"/><g fill="#fff" transform="translate(1.5 -0.5)"><circle cx="6.5" cy="2.3" r=".9"/><circle cx="3.2" cy="4" r=".9"/><circle cx="9.8" cy="4" r=".9"/><circle cx="2.3" cy="7.3" r=".9"/><circle cx="10.7" cy="7.3" r=".9"/><path d="M5.6 9.5L7.6 4.2 7.5 9.8z"/></g></svg>
<div class="tabt" style="left:312px">Dashboard</div>
<div class="tab" style="left:385px;width:93px"></div>
<svg style="left:392px;top:99px" width="16" height="16" viewBox="0 0 16 16"><g transform="translate(-1 0)"><circle cx="6.6" cy="8" r="3.4" fill="none" stroke="#111" stroke-width="2.4"/><circle cx="6.6" cy="8" r="5" fill="none" stroke="#111" stroke-width="1.6" stroke-dasharray="1.6 1.5"/><circle cx="13.2" cy="4.4" r="1.8" fill="none" stroke="#111" stroke-width="1.6"/><circle cx="13.2" cy="4.4" r="3" fill="none" stroke="#111" stroke-width="1.1" stroke-dasharray="1.2 1.1"/><circle cx="13.2" cy="12" r="1.8" fill="none" stroke="#111" stroke-width="1.6"/><circle cx="13.2" cy="12" r="3" fill="none" stroke="#111" stroke-width="1.1" stroke-dasharray="1.2 1.1"/></g></svg>
<div class="tabt" style="left:411px">Properties</div>
<div class="tab" style="left:480px;width:57px"></div>
<svg style="left:487px;top:100px" width="16" height="16" viewBox="0 0 16 16"><path d="M2.3 1.3h6.8l3 3v9.4h-9.8z" fill="#fff" stroke="#111" stroke-width="1.3"/><path d="M8.7 1.5v3.2h3.2" fill="none" stroke="#111" stroke-width="1"/><path d="M4.2 7.2h5.8M4.2 9.2h5.8M4.2 11.2h5.8" stroke="#111" stroke-width="1.1"/></svg>
<div class="tabt" style="left:503.5px">SQL</div>
<div class="tab" style="left:538px;width:89px"></div>
<svg style="left:545px;top:100px" width="16" height="16" viewBox="0 0 16 16"><path d="M1.2 1.5v12.3h14.5" fill="none" stroke="#111" stroke-width="1.5"/><path d="M3 11l3.3-3.6 2.4 2L13 5" fill="none" stroke="#111" stroke-width="2"/><path d="M11 3.5h4v4z" fill="#111"/></svg>
<div class="tabt" style="left:565px">Statistics</div>
<div class="tab" style="left:629px;width:115px"></div>
<svg style="left:636px;top:100px" width="16" height="16" viewBox="0 0 16 16"><path d="M5.3 13.5V10L2.2 7.8c-.8-.6-.4-1.8.6-1.6l2.5 1.2V2.5c0-1.4 2.2-1.4 2.2 0v3.6h2.6c.9 0 1.6.5 1.8 1.3l.8 3.2v2.9z" fill="#fff" stroke="#111" stroke-width="1.3"/><rect x="5" y="11.8" width="7.2" height="2.4" fill="#111"/></svg>
<div class="tabt" style="left:653px">Dependencies</div>
<div class="tab" style="left:745px;width:103px"></div>
<svg style="left:752px;top:100px" width="16" height="16" viewBox="0 0 16 16"><path d="M12 1.5v3.8l-1 3.4c-.2.8-.9 1.3-1.8 1.3H7.5v3.6c0 1.4-2.2 1.4-2.2 0V9.8L2.8 8.4c-1-.3-1-1.6 0-1.9l2.5-1.2V1.5z" fill="#fff" stroke="#111" stroke-width="1.3"/><rect x="5" y="1.2" width="7.2" height="2.4" fill="#111"/></svg>
<div class="tabt" style="left:769px">Dependents</div>
<div class="tab" style="left:849px;width:78px;top:90px;height:31px;background:#fff"></div>
<svg style="left:856px;top:101px" width="10" height="16" viewBox="0 0 10 16"><path d="M4.3 1.2L1 8.6h2.7L2 13.8 7.8 5.8H5.2L7.3 1.2z" fill="#111"/></svg>
<div class="tabt" style="left:872px;top:101px;color:#111;font-size:12.7px">Query-1</div>
<div class="a" style="left:1407px;top:91px;width:24px;height:24px;border:2px solid #a0a0a0;border-radius:5px"></div>
<svg style="left:1415px;top:99px" width="9" height="9" viewBox="0 0 9 9"><path d="M1 1l7 7M8 1L1 8" stroke="#333" stroke-width="2.2"/></svg>
<div id="toolbar" class="a"></div>
<div class="btn" style="left:290px;width:96px"></div>
<div class="dv" style="left:328px"></div>
<div class="dv" style="left:367px"></div>
<svg style="left:301px;top:133px" width="16" height="13" viewBox="0 0 16 13"><path d="M1 11.5V1.2h4l1.3 1.5h5.2v2.6" fill="none" stroke="#111" stroke-width="1.3"/><path d="M1 11.6l3-5.8h10.8l-3 5.8z" fill="none" stroke="#111" stroke-width="1.3"/></svg>
<svg style="left:342px;top:134px" width="12" height="12" viewBox="0 0 12 12"><path d="M.7.7h9l1.6 1.6v9h-10.6z" fill="none" stroke="#111" stroke-width="1.4"/><path d="M3 .8v3.2h5V.8" fill="none" stroke="#111" stroke-width="1.3"/><rect x="6" y="1" width="1.3" height="2.3" fill="#111"/><rect x="2.8" y="7" width="6.4" height="4" fill="none" stroke="#111" stroke-width="1.3"/></svg>
<div class="a" style="left:373px;top:139px;width:0;height:0;border-left:4px solid transparent;border-right:4px solid transparent;border-top:4px solid #222"></div>
<div class="btnd" style="left:392px;width:76px"></div>
<div class="dv" style="left:430px"></div>
<svg style="left:403px;top:132px" width="16" height="16" viewBox="0 0 16 16"><path d="M1.5 1.5h4.5l2.5 2.5v1.5M1.5 1.5v9h4" fill="none" stroke="#6a6a6a" stroke-width="1.2"/><path d="M1.5 1.5h4.5l2.5 2.5" fill="none" stroke="#6a6a6a" stroke-width="1.2"/><path d="M6 5.5h5l3 3v6.5H6z" fill="#e8e8e8" stroke="#6a6a6a" stroke-width="1.2"/><path d="M10.5 5.5v3.5H14" fill="none" stroke="#6a6a6a" stroke-width="1"/></svg>
<svg style="left:442px;top:132px" width="16" height="16" viewBox="0 0 16 16"><rect x="1" y="1" width="8.5" height="12" fill="#6a6a6a"/><rect x="2" y="1" width="6" height="1.5" fill="#999"/><path d="M7 5.5h4.5l3 3v6.5H7z" fill="#e8e8e8" stroke="#6a6a6a" stroke-width="1.2"/><path d="M11 5.5v3.5h3.5" fill="none" stroke="#6a6a6a" stroke-width="1"/></svg>
<div class="btnd" style="left:475px;width:38px"></div>
<svg style="left:488px;top:133px" width="11" height="14" viewBox="0 0 11 14"><path d="M.5 2.5h10" stroke="#6a6a6a" stroke-width="1.4"/><path d="M3.5 2.5V1h4v1.5" fill="none" stroke="#6a6a6a" stroke-width="1.2"/><path d="M1.8 3.5l.7 9.7h6l.7-9.7" fill="none" stroke="#6a6a6a" stroke-width="1.4"/><path d="M4 5v6.5M5.5 5v6.5M7 5v6.5" stroke="#6a6a6a" stroke-width=".9"/></svg>
<div class="btnd" style="left:519px;width:57px"></div>
<div class="dv" style="left:557px"></div>
<svg style="left:531px;top:134px" width="12" height="12" viewBox="0 0 12 12"><path d="M0 0h12L7.5 5.2V12L4.5 9.5V5.2z" fill="#6a6a6a"/></svg>
<div class="a" style="left:562px;top:139px;width:0;height:0;border-left:4px solid transparent;border-right:4px solid transparent;border-top:4px solid #777"></div>
<div class="a" style="left:581px;top:127px;width:90px;height:26px;border:1px solid #333;background:linear-gradient(#d6d6d6,#d0d0d0)"></div>
<div class="t" style="left:586px;top:133px;font-size:14px;color:#111">No limit</div>
<div class="a" style="left:653px;top:129px;width:16px;height:22px;background:linear-gradient(#fafafa,#e4e4e4);border-left:1px solid #fff;border-right:1px solid #999;border-bottom:1px solid #999"></div>
<div class="a" style="left:656px;top:138px;width:0;height:0;border-left:4px solid transparent;border-right:4px solid transparent;border-top:4px solid #aaa"></div>
<div class="btn" style="left:675px;width:57px"></div>
<div class="dv" style="left:713px"></div>
<svg style="left:690px;top:133px" width="9" height="14" viewBox="0 0 9 14"><path d="M4.5 0L.5 7.5h3L2 14 8.5 5.3H5.3L7.5 0z" fill="#111"/></svg>
<div class="a" style="left:719px;top:139px;width:0;height:0;border-left:4px solid transparent;border-right:4px solid transparent;border-top:4px solid #222"></div>
<div class="btnd" style="left:734px;width:38px"></div>
<div class="a" style="left:747px;top:133px;width:13px;height:13px;background:#666"></div>
<div class="btn" style="left:778px;width:57px"></div>
<div class="dv" style="left:816px"></div>
<svg style="left:790px;top:133px" width="15" height="12" viewBox="0 0 15 12"><path d="M8 1.5H3C1.8 1.5 1 2.3 1 3.5v6c0 1.2.8 2 2 2h6c1.2 0 2-.8 2-2V7" fill="none" stroke="#111" stroke-width="1.6"/><path d="M5 9l.6-2.6L11.8.3c.4-.4 1-.4 1.4 0l.5.5c.4.4.4 1 0 1.4L7.5 8.4z" fill="#111"/></svg>
<div class="a" style="left:822px;top:139px;width:0;height:0;border-left:4px solid transparent;border-right:4px solid transparent;border-top:4px solid #222"></div>
<div class="btn" style="left:841px;width:57px"></div>
<div class="dv" style="left:879px"></div>
<svg style="left:854px;top:133px" width="14" height="12" viewBox="0 0 14 12"><path d="M5.3 0h3.4v4.5h2.6L7 8.8 2.7 4.5h2.6z" fill="#111"/><path d="M0 8h4.5l2.5 2.3L9.5 8H14v4H0z" fill="#111"/></svg>
<div class="a" style="left:885px;top:139px;width:0;height:0;border-left:4px solid transparent;border-right:4px solid transparent;border-top:4px solid #222"></div>
<div id="bluebar" class="a"></div>
<div class="t" style="left:290px;top:167px;font-size:12px;font-weight:bold;color:#fff">datatypes on Shirley@pg</div>
<div id="editor" class="a"></div><div id="gutter" class="a"></div>
<div class="t" style="left:303px;top:193px;font-family:'Liberation Mono',monospace;font-size:15px;color:#999">1</div>
<div id="edbot" class="a"></div><div id="btabs" class="a"></div><div id="vline" class="a"></div>
<div class="a" style="left:288px;top:440px;width:99px;height:31px;background:#e6e6e6;border-radius:4px 4px 0 0"></div>
<div class="t" style="left:301px;top:450px;font-size:13px;color:#337ab7">Data Output</div>
<div class="a" style="left:393px;top:440px;width:99px;height:31px;background:#fff;border-radius:4px 4px 0 0"></div>
<div class="t" style="left:402px;top:450px;font-size:13px;color:#111">Query History</div>
<div id="hist" class="a">
<div class="hh" style="top:0px"><div class="hht">Today</div></div>
<div class="hi" style="top:22px;"><div class="hi1" style="">CREATE EXT…</div><div class="hi2" style="">18:25</div></div>
<div class="hi" style="top:58px;"><div class="hi1" style="">CREATE EXT…</div><div class="hi2" style="">18:05</div></div>
<div class="hi" style="top:94px;"><div class="hi1" style="">CREATE EXT…</div><div class="hi2" style="">15:42</div></div>
<div class="hi" style="top:130px;"><div class="hi1" style="">CREATE EXT…</div><div class="hi2" style="">15:13</div></div>
<div class="hi" style="top:166px;"><div class="hi1" style="">CREATE EXT…</div><div class="hi2" style="">13:59</div></div>
<div class="hi" style="top:202px;"><div class="hi1" style="">CREATE EXT…</div><div class="hi2" style="">13:57</div></div>
<div class="hi" style="top:238px;background:#dccad6;border:2px solid #2774b8;"><div class="hi1" style="color:#2774b8;font-weight:bold;left:4px;top:6px;">CREATE EXT…</div><div class="hi2" style="color:#2774b8;font-weight:bold;left:5px;top:19px;">13:55</div></div>
<div class="hi" style="top:274px;background:#f8d6dc;"><div class="hi1" style="">CREATE EXT…</div><div class="hi2" style="">13:48</div></div>
<div class="hi" style="top:310px;"><div class="hi1" style="">CREATE EXT…</div><div class="hi2" style="">13:32</div></div>
<div class="hh" style="top:346px"><div class="hht">Yesterday</div></div>
<div class="hi" style="top:368px;"><div class="hi1" style="">CREATE EXT…</div><div class="hi2" style="">17:45</div></div>
<div class="hi" style="top:404px;"><div class="hi1" style="">CREATE EXT…</div><div class="hi2" style="">17:40</div></div>
<div class="hi" style="top:440px;"><div class="hi1" style="">CREATE EXT…</div><div class="hi2" style="">17:31</div></div>
<div class="hi" style="top:476px;"><div class="hi1" style="">CREATE EXT…</div><div class="hi2" style="">17:13</div></div>
<div class="hi" style="top:512px;"><div class="hi1" style="">CREATE EXT…</div><div class="hi2" style="">16:48</div></div>
<div class="hi" style="top:548px;"><div class="hi1" style="">CREATE EXT…</div><div class="hi2" style="">16:30</div></div>
</div>
<div class="a" style="left:381px;top:473px;width:8px;height:110px;background:#d8d8d8;border:1px solid #8a8a8a;border-radius:4px"></div>
<div id="hgap" class="a"></div>
<div id="detail" class="a"></div><div id="errbar" class="a"></div>
<div class="el" style="left:544px">Error Message</div><div class="ev" style="left:631px">Inappropriate isolation level for branch transaction</div>
<div class="el" style="left:966px">Error Code</div><div class="ev" style="left:1033px">46206</div>
<div class="el" style="left:1118px">Location</div><div class="ev" style="left:1173px">Line 1, Character 167</div>
<div class="iv" style="left:422px">2-22-17  15:45 EST</div><div class="il" style="left:422px">Date</div>
<div class="iv" style="left:597px">--</div><div class="il" style="left:597px">Rows Affected</div>
<div class="iv" style="left:702px">.34 sec</div><div class="il" style="left:702px">Duration</div>
<div class="iv" style="left:807px">12345</div><div class="il" style="left:807px">Session ID</div>
<div class="iv" style="left:912px;font-size:14.1px">databasedatabasedatabasedatabasedatabasedatabasedatabasedatabas</div><div class="il" style="left:912px">Database</div>
<div class="a" style="left:1439px;top:432px;width:1px;height:39px;background:#888"></div>
<div class="a" style="left:1439px;top:501px;width:1px;height:55px;background:#888"></div>
<div id="infob" class="a"></div>
<div id="code" class="a">
<div class="a" style="left:403px;top:26.5px;width:18px;height:22px;background:#f4c8d2"></div>
<pre class="a" style="left:9px;top:32px"><span class="k">CREATE OR REPLACE PROCEDURE</span> SP_LOAD_AGG_TMP (<span class="b">BIGINT</span>, <span class="b">INTEGER</span>, <span class="b">INTEGER</span>, <span class="b">CHARACTER VARYING</span>(<span class="n">128</span>)) <span class="k">RETURNS</span> <span class="b">CHARACTER VARYING</span> <span class="k">ANY</span>
	<span class="k">language</span> plsql
<span class="k">EXECUTE AS OWNER</span>
<span class="k">AS</span>
BEGIN_PROC
<span class="k">DECLARE</span>
<span class="c">/*</span>
<span class="c">History:</span>
	<span class="c">2011-11-01 A.Lyska: Created.</span>
	<span class="c">…</span>
	<span class="c">2012-02-21 A.Lyska: RPTG-241 Fixed recalculate, when added new url_key. Remove _exec variable.</span>
	<span class="c">2012-02-22 A.Lyska: RPTG-255 Fixed changing timezone offset for Enterprise.</span>
	<span class="c">2012-03-27 A.Shabrov: RPTG-353 Change the logic for tmp_fact_message_url_light table.</span>
	<span class="c">2012-04-18 A.Lyska: RPTG-453 Fixed changing timezone offset for Enterprise (rows not fully marked as deleted).</span>
	<span class="c">2012-05-05 A.Shabrov: RPTG-472 Set the minimum time grain to 1 hours in AGG_TIMEANALYTIC_* tables</span>
	<span class="c">                    RPTG-249 Optimize SP_LOAD_AGG</span>
	<span class="c">2012-05-16 A.Shabrov: RPTG-514 Optimize the load into AGG_TIMEINTANALYTIC_CONTACTATTR_URL to avoid broadcasting on all</span>
	<span class="c">                    CORE-2426 Disable JIT in all RB loading sprocs for faster execution</span>
	<span class="c">2012-05-16 A.Shabrov: RPTG-552 Optimize the load of AGGs by using same temp tables</span>
	<span class="c">2012-07-02 A.Shabrov: RPTG-669 Change SP_LOAD_AGG to handle previously failed loads</span>
	<span class="c">2012-07-02 A.Shabrov: RPTG-691 Remove the AGG_TIMEINTANALYTIC_CONTACTATTR &amp; AGG_TIMEINTANALYTIC_CONTACTATTR_URL from the</span>
<span class="c">spoke (Netezza part)</span>
	<span class="c">2012-07-09 A.Shabrov: RPTG-694 Populate MINI_CONTACT_ATTRIBUTE_KEY column in all AGG tables</span>

<span class="c">Purpose:</span>
<span class="c">Parameters:</span>
<span class="c">*/</span>
	)$EnterpriseId ALIAS <span class="k">FOR</span> )$1</pre>
</div>
<div id="copy" class="a"></div>
<div class="t" style="left:419px;top:563px;font-size:12px;font-weight:bold;color:#2774b8">Copy All</div>
<div class="a" style="left:1424px;top:562px;width:12px;height:73px;background:#d6d6d6;border:1px solid #a0a0a0;border-radius:6px"></div>
<div class="a" style="left:415px;top:1008px;width:313px;height:12px;background:#d6d6d6;border:1px solid #999;border-radius:6px"></div>
</body></html>
